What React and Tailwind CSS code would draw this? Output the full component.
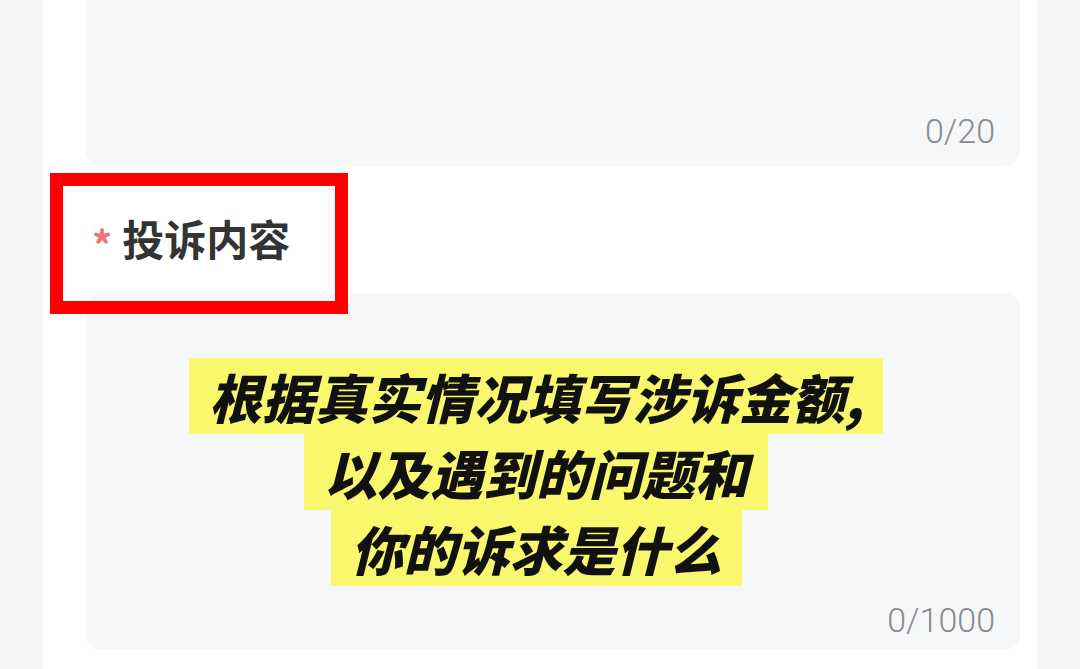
import React from 'react';

const sans = { fontFamily: '"Noto Sans CJK SC", "Noto Sans", sans-serif' };

const Counter = ({ text }) => (
  <span
    className="self-end text-[34px] leading-none text-[#8a8a8e] font-light"
    style={{ fontFamily: 'Roboto, "Noto Sans", sans-serif' }}
  >
    {text}
  </span>
);

const HintLine = ({ children }) => (
  <span className="block w-fit bg-[#f9f76c] px-[20px] h-[76px] leading-[76px] text-[53px] font-black italic text-[#111]">
    {children}
  </span>
);

export default function App() {
  return (
    <div className="w-[1080px] h-[669px] overflow-hidden bg-[#f4f5f7]" style={sans}>
      <div className="mx-[43px] h-full bg-white pl-[43px] pr-[17px]">
        {/* title input (scrolled, top cut off) */}
        <div className="h-[166px] rounded-b-2xl bg-[#f6f7f9] flex flex-col justify-end pr-[25px] pb-[18px]">
          <Counter text="0/20" />
        </div>

        {/* label */}
        <div className="relative h-[127px] pt-[51px] pl-[6px]">
          <div className="flex items-center h-[42px]">
            <span className="text-[40px] leading-none font-bold text-[#f07272] mt-[12px] mr-[10px]">*</span>
            <span className="text-[42px] leading-[42px] font-bold text-[#333]">投诉内容</span>
          </div>
          <div className="absolute left-[-36px] top-[7px] w-[298px] h-[141px] border-[13px] border-[#ff0000]" />
        </div>

        {/* content textarea */}
        <div className="h-[357px] rounded-2xl bg-[#f6f7f9] flex flex-col pr-[25px] pb-[13px]">
          <div className="flex flex-col items-center pt-[65px] pr-[9px]">
            <HintLine>根据真实情况填写涉诉金额,</HintLine>
            <HintLine>以及遇到的问题和</HintLine>
            <HintLine>你的诉求是什么</HintLine>
          </div>
          <div className="flex-1" />
          <Counter text="0/1000" />
        </div>
      </div>
    </div>
  );
}
